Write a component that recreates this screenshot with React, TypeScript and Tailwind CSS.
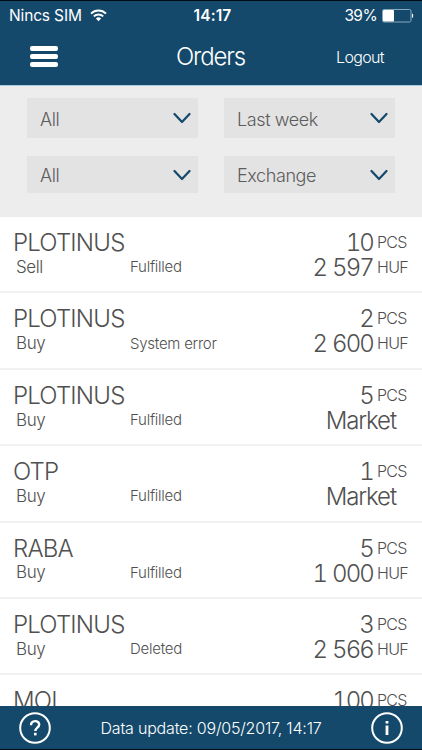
interface Order {
	name: string;
	side?: string;
	status?: string;
	amount: string;
	price?: string;
}

const orders: Order[] = [
	{ name: "PLOTINUS", side: "Sell", status: "Fulfilled", amount: "10", price: "2 597" },
	{ name: "PLOTINUS", side: "Buy", status: "System error", amount: "2", price: "2 600" },
	{ name: "PLOTINUS", side: "Buy", status: "Fulfilled", amount: "5", price: "Market" },
	{ name: "OTP", side: "Buy", status: "Fulfilled", amount: "1", price: "Market" },
	{ name: "RABA", side: "Buy", status: "Fulfilled", amount: "5", price: "1 000" },
	{ name: "PLOTINUS", side: "Buy", status: "Deleted", amount: "3", price: "2 566" },
	{ name: "MOL", amount: "100" },
];

const StatusBar = () => (
	<div className="grid h-[29px] grid-cols-[1fr_40px_1fr] items-center pl-[9px] pr-[8px] text-[15.5px] leading-[18px]">
		<div className="flex items-center gap-[8px]">
			<span className="whitespace-nowrap font-normal tracking-[-0.15px]">Nincs SIM</span>
			<svg width="17" height="13" viewBox="0 0 17 13" className="shrink-0" fill="none" stroke="white" strokeWidth="2">
				<path d="M1 4.6a10.6 10.6 0 0 1 15 0" />
				<path d="M3.8 7.4a6.7 6.7 0 0 1 9.4 0" />
				<path d="M8.5 12.3 5.9 9.6a3.7 3.7 0 0 1 5.2 0z" fill="white" stroke="none" />
			</svg>
		</div>
		<span className="pl-[2px] text-center font-semibold tracking-[0.1px]">14:17</span>
		<div className="flex items-center justify-end gap-[5px]">
			<span className="font-normal tracking-[-0.6px]">39%</span>
			<svg width="32" height="14" viewBox="0 0 32 14">
				<rect x="0.5" y="0.5" width="28.5" height="12.5" rx="1.5" fill="none" stroke="#8aa8bb" />
				<rect x="1" y="1" width="11" height="11.5" rx="1" fill="white" />
				<path d="M30 4.5c1.6.4 1.6 4.2 0 4.6z" fill="white" />
			</svg>
		</div>
	</div>
);

const Header = () => (
	<div className="grid h-[55px] grid-cols-[30px_1fr_54px] items-center pl-[30px] pr-[32px]">
		<button className="flex w-[28px] flex-col gap-[3px] pb-[2px]">
			<span className="h-[5px] rounded-[2px] bg-white" />
			<span className="h-[5px] rounded-[2px] bg-white" />
			<span className="h-[5px] rounded-[2px] bg-white" />
		</button>
		<h1 className="pb-[2px] pl-[25px] text-center text-[24px] leading-[28px] tracking-[-1.1px]">Orders</h1>
		<button className="pb-px text-left text-[16px] leading-[20px] tracking-[-0.65px]">Logout</button>
	</div>
);

const Select = ({ label, className }: { label: string; className: string }) => (
	<button className={`flex w-[171px] items-center justify-between bg-[#e3e3e3] pl-[13px] pr-[7px] text-[#5c5c5c] ${className}`}>
		<span className="pt-[3px] text-[18px] leading-[22px] tracking-[-0.4px]">{label}</span>
		<svg width="18" height="12" viewBox="0 0 18 12" fill="none" stroke="#14496b" strokeWidth="2.2" strokeLinecap="round" strokeLinejoin="round">
			<path d="M1.5 2 9 10l7.5-8" />
		</svg>
	</button>
);

const Quantity = ({ value, unit }: { value: string; unit: string }) => (
	<div className="flex items-center justify-end gap-[4px]">
		<span className="tabular-nums tracking-[-1.9px] [word-spacing:1.5px]">{value}</span>
		<span className="w-[32px] text-[16px] tracking-[-0.7px]">{unit}</span>
	</div>
);

const OrderRow = ({ order }: { order: Order }) => (
	<div className="flex h-[76.4px] shrink-0 justify-between border-b-2 border-[#f1f1f1] pl-[13px] pr-[13px] pt-[13px] text-[#505050]">
		<div>
			<div className="text-[24px] leading-[25px] tracking-[-0.8px]">{order.name}</div>
			{order.side && (
				<div className="flex h-[25px] items-center pl-[3px]">
					<span className="w-[114px] text-[17px] tracking-[-0.4px]">{order.side}</span>
					<span className="text-[15px] tracking-[-0.25px]">{order.status}</span>
				</div>
			)}
		</div>
		<div className="text-[24px] leading-[25px]">
			<Quantity value={order.amount} unit="PCS" />
			{order.price === "Market" && <div className="pr-[13px] text-right tracking-[-1.1px]">{order.price}</div>}
			{order.price && order.price !== "Market" && <Quantity value={order.price} unit="HUF" />}
		</div>
	</div>
);

const Footer = () => (
	<div className="flex h-[44px] shrink-0 items-center justify-between border-b border-[#020a14] bg-[#14496b] pl-[19px] pr-[19px] text-white">
		<svg width="32" height="32" viewBox="0 0 32 32" fill="none" stroke="white" strokeWidth="2">
			<circle cx="16" cy="16" r="14.8" />
			<path d="M12 13.2c0-5.4 8.2-5.2 8.2-.7 0 3-3.9 3.2-3.9 6.5" strokeWidth="2.4" />
			<path d="M16.3 20.8v2.6" strokeWidth="2.6" />
		</svg>
		<span className="text-[16px] tracking-[-0.2px]">Data update: 09/05/2017, 14:17</span>
		<svg width="32" height="32" viewBox="0 0 32 32" fill="none" stroke="white" strokeWidth="2">
			<circle cx="16" cy="16" r="14.8" />
			<path d="M16 9v2.6M16 13.4v9.6" strokeWidth="2.8" />
		</svg>
	</div>
);

const App = () => {
	return (
		<div className="flex h-[750px] w-[422px] flex-col overflow-hidden bg-white font-['Inter',sans-serif] font-light">
			<div className="h-[86px] shrink-0 border-b border-t border-b-[#a9cce0] border-t-[#020a14] bg-[#14496b] text-white">
				<StatusBar />
				<Header />
			</div>
			<div className="flex h-[131px] shrink-0 flex-col gap-[18px] bg-[#ededed] px-[27px] pt-[12px]">
				<div className="flex justify-between">
					<Select label="All" className="h-[40px]" />
					<Select label="Last week" className="h-[40px]" />
				</div>
				<div className="flex justify-between">
					<Select label="All" className="h-[37px]" />
					<Select label="Exchange" className="h-[37px]" />
				</div>
			</div>
			<div className="flex min-h-0 flex-1 flex-col overflow-hidden">
				{orders.map((order, i) => (
					<OrderRow key={i} order={order} />
				))}
			</div>
			<Footer />
		</div>
	);
};

export default App;
